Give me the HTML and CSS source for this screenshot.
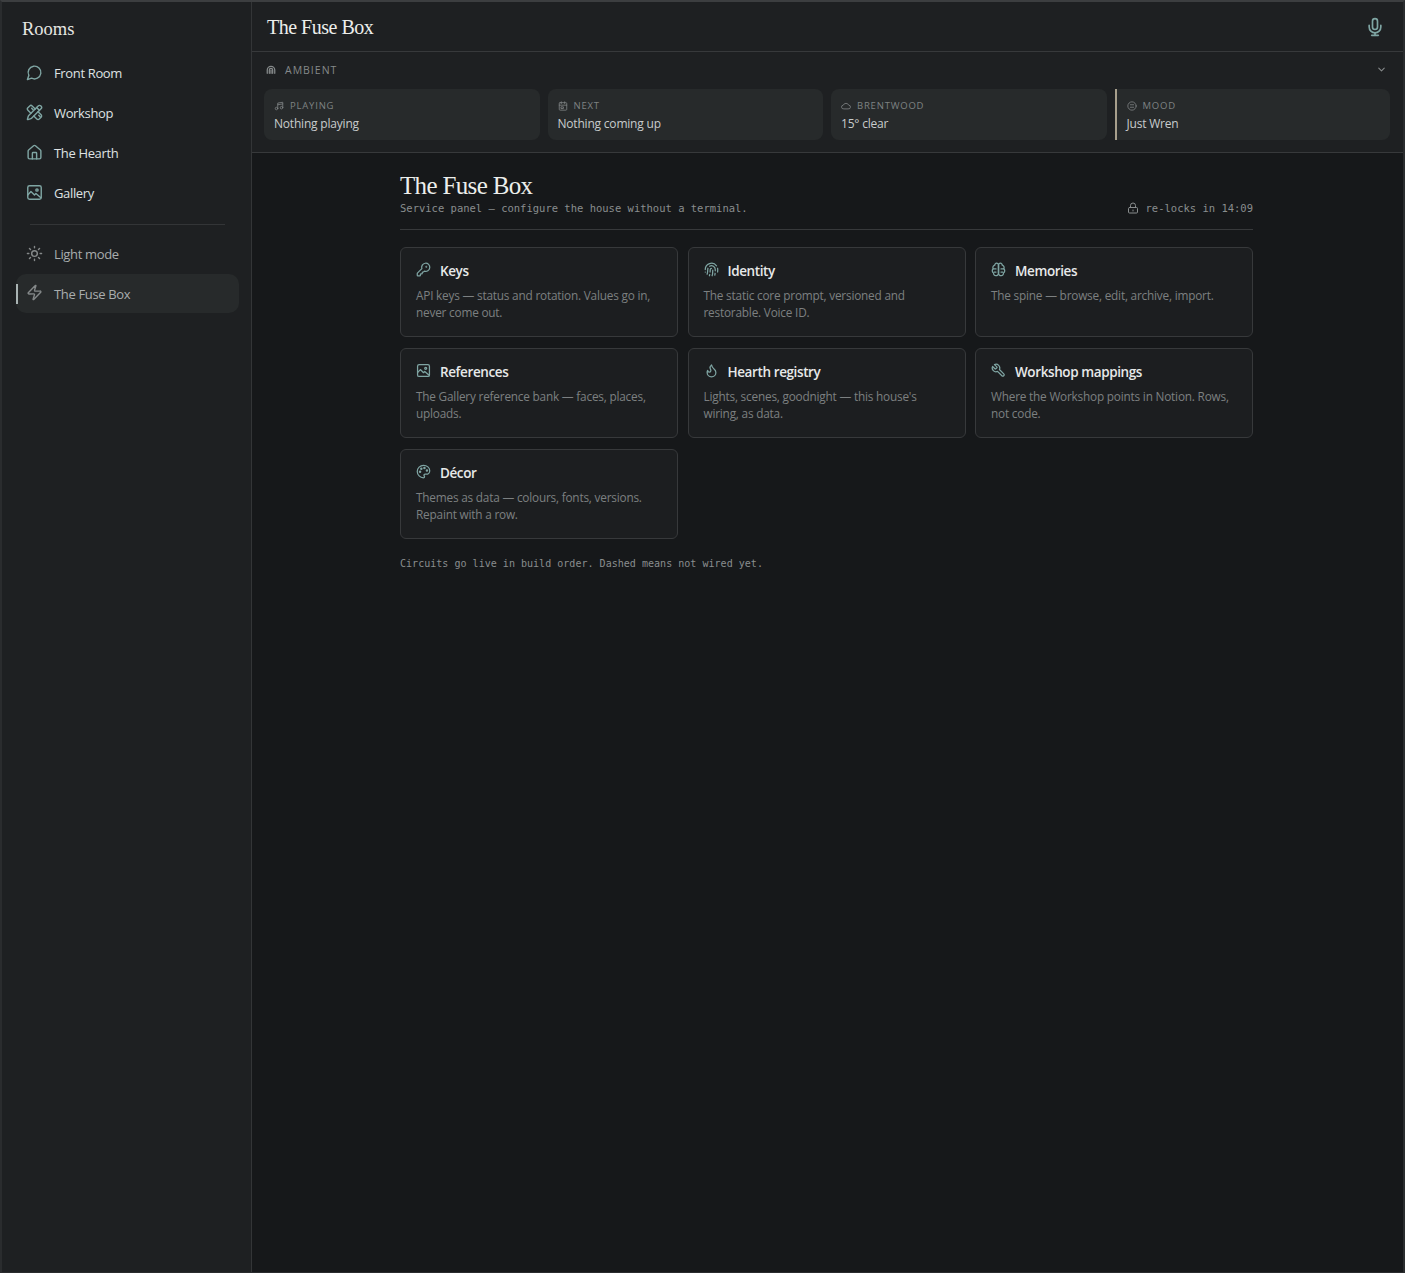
FILE: index.html
```html
<!DOCTYPE html>
<html lang="en">
<head>
<meta charset="utf-8">
<title>The Fuse Box</title>
<link rel="stylesheet" href="styles.css">
</head>
<body>
<svg class="sprite" xmlns="http://www.w3.org/2000/svg">
<symbol id="i-chat" viewBox="0 0 24 24"><path d="M7.9 20A9 9 0 1 0 4 16.1L2 22Z"/></symbol>
<symbol id="i-tools" viewBox="0 0 24 24"><path d="M13 7 8.7 2.7a2.41 2.41 0 0 0-3.4 0L2.7 5.3a2.41 2.41 0 0 0 0 3.4L7 13"/><path d="m8 6 2 2"/><path d="m18 16 2 2"/><path d="m17 11 4.3 4.3c.94.94.94 2.46 0 3.4l-2.6 2.6c-.94.94-2.46.94-3.4 0L11 17"/><path d="M21.174 6.812a1 1 0 0 0-3.986-3.987L3.842 16.174a2 2 0 0 0-.5.83l-1.321 4.352a.5.5 0 0 0 .623.622l4.353-1.32a2 2 0 0 0 .83-.497z"/><path d="m15 5 4 4"/></symbol>
<symbol id="i-house" viewBox="0 0 24 24"><path d="M15 21v-8a1 1 0 0 0-1-1h-4a1 1 0 0 0-1 1v8"/><path d="M3 10a2 2 0 0 1 .709-1.528l7-5.999a2 2 0 0 1 2.582 0l7 5.999A2 2 0 0 1 21 10v9a2 2 0 0 1-2 2H5a2 2 0 0 1-2-2z"/></symbol>
<symbol id="i-image" viewBox="0 0 24 24"><rect x="2.5" y="2.5" width="19" height="19" rx="2.5"/><circle cx="15.5" cy="8.5" r="1.6"/><path d="M2.5 15.5l4.5-5 5 5 2-2 7 6"/></symbol>
<symbol id="i-sun" viewBox="0 0 24 24"><circle cx="12" cy="12" r="4"/><path d="M12 2v2M12 20v2M4.93 4.93l1.41 1.41M17.66 17.66l1.41 1.41M2 12h2M20 12h2M6.34 17.66l-1.41 1.41M19.07 4.93l-1.41 1.41"/></symbol>
<symbol id="i-zap" viewBox="0 0 24 24"><path d="M4 14a1 1 0 0 1-.78-1.63l9.9-10.2a.5.5 0 0 1 .86.46l-1.92 6.02A1 1 0 0 0 13 10h7a1 1 0 0 1 .78 1.63l-9.9 10.2a.5.5 0 0 1-.86-.46l1.92-6.02A1 1 0 0 0 11 14z"/></symbol>
<symbol id="i-mic" viewBox="0 0 24 24"><path d="M12 19v3"/><path d="M8 22h8"/><path d="M19 10v2a7 7 0 0 1-14 0v-2"/><rect x="9" y="2" width="6" height="13" rx="3"/></symbol>
<symbol id="i-arch" viewBox="0 0 24 24"><path d="M3 20v-8a9 9 0 0 1 18 0v8"/><path d="M8 20v-8a4 4 0 0 1 8 0v8"/><path d="M12 12v8"/></symbol>
<symbol id="i-music" viewBox="0 0 24 24"><path d="M9 18V5l12-2v13"/><circle cx="6" cy="18" r="3"/><circle cx="18" cy="16" r="3"/><path d="M9 9l12-2"/></symbol>
<symbol id="i-cal" viewBox="0 0 24 24"><rect x="3" y="4" width="18" height="18" rx="2"/><path d="M3 10h18M16 2v4M8 2v4M8 14h5v4H8z"/></symbol>
<symbol id="i-cloud" viewBox="0 0 24 24"><path d="M6 19a4.5 4.5 0 0 1-.5-9 7 7 0 0 1 13 0 4.5 4.5 0 0 1-.5 9z"/></symbol>
<symbol id="i-meh" viewBox="0 0 24 24"><circle cx="12" cy="12" r="10"/><path d="M8 15h8M8 9h8"/></symbol>
<symbol id="i-chev" viewBox="0 0 24 24"><path d="m6 9 6 6 6-6"/></symbol>
<symbol id="i-lock" viewBox="0 0 24 24"><rect x="3" y="11" width="18" height="11" rx="2"/><path d="M7 11V7a5 5 0 0 1 10 0v4"/><path d="M12 16v2"/></symbol>
<symbol id="i-key" viewBox="0 0 24 24"><path d="M2.586 17.414A2 2 0 0 0 2 18.828V21a1 1 0 0 0 1 1h3a1 1 0 0 0 1-1v-1a1 1 0 0 1 1-1h1a1 1 0 0 0 1-1v-1a1 1 0 0 1 1-1h.172a2 2 0 0 0 1.414-.586l.814-.814a6.5 6.5 0 1 0-4-4z"/><circle cx="16.5" cy="7.5" r=".5"/></symbol>
<symbol id="i-finger" viewBox="0 0 24 24"><path d="M12 10a2 2 0 0 0-2 2c0 1.02-.1 2.51-.26 4"/><path d="M14 13.12c0 2.38 0 6.38-1 8.88"/><path d="M17.29 21.02c.12-.6.43-2.3.5-3.02"/><path d="M2 12a10 10 0 0 1 18-6"/><path d="M2 16h.01"/><path d="M21.8 16c.2-2 .131-5.354 0-6"/><path d="M5 19.5C5.5 18 6 15 6 12a6 6 0 0 1 .34-2"/><path d="M8.65 22c.21-.66.45-1.32.57-2"/><path d="M9 6.8a6 6 0 0 1 9 5.2v2"/></symbol>
<symbol id="i-brain" viewBox="0 0 24 24"><path d="M12 5a3 3 0 1 0-5.997.125 4 4 0 0 0-2.526 5.77 4 4 0 0 0 .556 6.588A4 4 0 1 0 12 18Z"/><path d="M12 5a3 3 0 1 1 5.997.125 4 4 0 0 1 2.526 5.77 4 4 0 0 1-.556 6.588A4 4 0 1 1 12 18Z"/><path d="M12 5v13M3.5 11H8M16 11h4.5M5 16h3M16 16h3"/></symbol>
<symbol id="i-flame" viewBox="0 0 24 24"><path d="M8.5 14.5A2.5 2.5 0 0 0 11 12c0-1.38-.5-2-1-3-1.072-2.143-.224-4.054 2-6 .5 2.5 2 4.9 4 6.5 2 1.6 3 3.5 3 5.5a7 7 0 1 1-14 0c0-1.153.433-2.294 1-3a2.5 2.5 0 0 0 2.5 2.5z"/></symbol>
<symbol id="i-wrench" viewBox="0 0 24 24"><g transform="translate(24 0) scale(-1 1)"><path d="M14.7 6.3a1 1 0 0 0 0 1.4l1.6 1.6a1 1 0 0 0 1.4 0l3.77-3.77a6 6 0 0 1-7.94 7.94l-6.91 6.91a2.12 2.12 0 0 1-3-3l6.91-6.91a6 6 0 0 1 7.94-7.94l-3.76 3.76z"/></g></symbol>
<symbol id="i-palette" viewBox="0 0 24 24"><circle cx="13.5" cy="6.5" r="1"/><circle cx="17.5" cy="10.5" r="1"/><circle cx="8.5" cy="7.5" r="1"/><circle cx="6.5" cy="12.5" r="1"/><path d="M12 2C6.5 2 2 6.5 2 12s4.5 10 10 10c.926 0 1.648-.746 1.648-1.688 0-.437-.18-.835-.437-1.125-.29-.289-.438-.652-.438-1.125a1.64 1.64 0 0 1 1.668-1.668h1.996c3.051 0 5.555-2.503 5.555-5.554C21.965 6.012 17.461 2 12 2z"/></symbol>
</svg>

<div class="app">
  <aside class="sidebar">
    <h2 class="rooms">Rooms</h2>
    <nav class="nav">
      <a class="nav-item"><svg class="ico ico-nav"><use href="#i-chat"/></svg><span>Front Room</span></a>
      <a class="nav-item"><svg class="ico ico-nav"><use href="#i-tools"/></svg><span>Workshop</span></a>
      <a class="nav-item"><svg class="ico ico-nav"><use href="#i-house"/></svg><span>The Hearth</span></a>
      <a class="nav-item"><svg class="ico ico-nav"><use href="#i-image"/></svg><span>Gallery</span></a>
    </nav>
    <div class="nav-rule"></div>
    <nav class="nav">
      <a class="nav-item muted"><svg class="ico ico-nav"><use href="#i-sun"/></svg><span>Light mode</span></a>
      <a class="nav-item muted active"><svg class="ico ico-nav"><use href="#i-zap"/></svg><span>The Fuse Box</span></a>
    </nav>
  </aside>

  <div class="content">
    <header class="topbar">
      <h1 class="topbar-title">The Fuse Box</h1>
      <svg class="ico ico-mic"><use href="#i-mic"/></svg>
    </header>

    <section class="ambient">
      <div class="ambient-head">
        <span class="ambient-label"><svg class="ico ico-arch"><use href="#i-arch"/></svg>AMBIENT</span>
        <svg class="ico ico-chev"><use href="#i-chev"/></svg>
      </div>
      <div class="ambient-grid">
        <div class="tile"><div class="tile-label"><svg class="ico ico-tile"><use href="#i-music"/></svg>PLAYING</div><div class="tile-value">Nothing playing</div></div>
        <div class="tile"><div class="tile-label"><svg class="ico ico-tile"><use href="#i-cal"/></svg>NEXT</div><div class="tile-value">Nothing coming up</div></div>
        <div class="tile"><div class="tile-label"><svg class="ico ico-tile"><use href="#i-cloud"/></svg>BRENTWOOD</div><div class="tile-value">15° clear</div></div>
        <div class="tile tile-accent"><div class="tile-label"><svg class="ico ico-tile"><use href="#i-meh"/></svg>MOOD</div><div class="tile-value">Just Wren</div></div>
      </div>
    </section>

    <main class="main">
      <div class="panel">
        <div class="panel-head">
          <div>
            <h2 class="panel-title">The Fuse Box</h2>
            <p class="mono">Service panel — configure the house without a terminal.</p>
          </div>
          <p class="mono relock"><svg class="ico ico-lock"><use href="#i-lock"/></svg>re-locks in 14:09</p>
        </div>
        <div class="cards">
          <article class="card"><h3 class="card-title"><svg class="ico ico-card"><use href="#i-key"/></svg>Keys</h3><p class="card-text">API keys — status and rotation. Values go in, never come out.</p></article>
          <article class="card"><h3 class="card-title"><svg class="ico ico-card"><use href="#i-finger"/></svg>Identity</h3><p class="card-text">The static core prompt, versioned and restorable. Voice ID.</p></article>
          <article class="card"><h3 class="card-title"><svg class="ico ico-card"><use href="#i-brain"/></svg>Memories</h3><p class="card-text">The spine — browse, edit, archive, import.</p></article>
          <article class="card"><h3 class="card-title"><svg class="ico ico-card"><use href="#i-image"/></svg>References</h3><p class="card-text">The Gallery reference bank — faces, places, uploads.</p></article>
          <article class="card"><h3 class="card-title"><svg class="ico ico-card"><use href="#i-flame"/></svg>Hearth registry</h3><p class="card-text">Lights, scenes, goodnight — this house's wiring, as data.</p></article>
          <article class="card"><h3 class="card-title"><svg class="ico ico-card"><use href="#i-wrench"/></svg>Workshop mappings</h3><p class="card-text">Where the Workshop points in Notion. Rows, not code.</p></article>
          <article class="card"><h3 class="card-title"><svg class="ico ico-card"><use href="#i-palette"/></svg>Décor</h3><p class="card-text">Themes as data — colours, fonts, versions. Repaint with a row.</p></article>
        </div>
        <p class="mono foot">Circuits go live in build order. Dashed means not wired yet.</p>
      </div>
    </main>
  </div>
</div>
</body>
</html>
```

FILE: styles.css
```css
* { box-sizing: border-box; }
html, body { margin: 0; height: 100%; }
body {
  background: #16181a;
  font-family: "Open Sans", "Noto Sans", sans-serif;
  color: #d8dbdc;
  overflow: hidden;
}
.sprite { display: none; }
.ico {
  fill: none;
  stroke: currentColor;
  stroke-width: 2;
  stroke-linecap: round;
  stroke-linejoin: round;
  flex: none;
}
h1, h2, h3, p { margin: 0; font-weight: normal; }

.app {
  display: flex;
  height: 1273px;
  border-top: 2px solid #3c3e40;
  border-left: 2px solid #2a2c2e;
  border-right: 2px solid #2a2c2e;
  border-bottom: 1px solid #2a2c2e;
}

.sidebar {
  width: 250px;
  flex: none;
  background: #1e2022;
  border-right: 1px solid #333537;
  padding: 15px 12px 0 14px;
}
.rooms {
  font-family: "Liberation Serif", "DejaVu Serif", serif;
  font-size: 18.5px;
  line-height: 24px;
  color: #e6e6e2;
  padding-left: 6px;
  margin-bottom: 12px;
}
.nav { display: flex; flex-direction: column; }
.nav-item {
  display: flex;
  align-items: center;
  gap: 11px;
  height: 40px;
  padding-left: 10px;
  font-size: 13px;
  letter-spacing: -.35px;
  color: #dfe2e3;
  border-radius: 10px;
  position: relative;
}
.ico-nav { width: 17px; height: 17px; color: #7fa5a3; stroke-width: 2; margin-top: -2px; }
.muted { color: #a9adae; }
.muted .ico-nav { color: #85898a; }
.active { background: #272a2b; height: 39px; }
.active::before {
  content: "";
  position: absolute;
  left: 0;
  top: 10px;
  width: 2px;
  height: 20px;
  background: #a9b3b3;
}
.nav-rule {
  height: 1px;
  background: #333537;
  margin: 11px 14px 9px 14px;
}

.content { flex: 1; min-width: 0; display: flex; flex-direction: column; }
.topbar {
  height: 50px;
  flex: none;
  background: #1e2022;
  border-bottom: 1px solid #37393b;
  display: flex;
  align-items: center;
  justify-content: space-between;
  padding: 2px 18px 0 15px;
}
.topbar-title {
  font-family: "Liberation Serif", "DejaVu Serif", serif;
  font-size: 20px;
  letter-spacing: -.5px;
  color: #eceeeb;
}
.ico-mic { width: 20px; height: 20px; color: #7fa5a3; stroke-width: 2; margin-top: -2px; }

.ambient {
  flex: none;
  height: 101px;
  background: #1e2022;
  border-bottom: 1px solid #37393b;
  padding: 0 13px 0 12px;
}
.ambient-head {
  height: 37px;
  display: flex;
  align-items: center;
  justify-content: space-between;
  padding: 0 3px 2px 2px;
}
.ambient-label {
  display: flex;
  align-items: center;
  gap: 9px;
  font-size: 10.5px;
  letter-spacing: 1px;
  color: #85898a;
}
.ico-arch { width: 10px; height: 10px; color: #85898a; stroke-width: 3; }
.ico-chev { width: 11px; height: 11px; color: #85898a; stroke-width: 2.4; }
.ambient-grid {
  display: grid;
  grid-template-columns: repeat(4, 1fr);
  gap: 8px;
}
.tile {
  height: 51px;
  background: #272a2b;
  border-radius: 8px;
  padding: 10px 10px 0;
}
.tile-accent { border-left: 2px solid #a79f8c; border-radius: 0 8px 8px 0; padding-left: 10px; }
.tile-label {
  display: flex;
  align-items: center;
  gap: 6px;
  font-size: 9.5px;
  letter-spacing: .8px;
  line-height: 14px;
  color: #7e8283;
}
.ico-tile { width: 10px; height: 10px; }
.tile-value { font-size: 12px; letter-spacing: -.2px; line-height: 18px; margin-top: 2px; color: #c8cccd; }

.main { flex: 1; min-height: 0; }
.panel { width: 853px; margin: 0 auto; padding-top: 20px; transform: translateX(-1px); }
.panel-head {
  display: flex;
  justify-content: space-between;
  align-items: flex-end;
  padding-bottom: 13px;
  border-bottom: 1px solid #37393b;
  margin-bottom: 17px;
}
.panel-title {
  font-family: "Liberation Serif", "DejaVu Serif", serif;
  font-size: 25px;
  letter-spacing: -.65px;
  line-height: 26px;
  color: #eceeeb;
}
.mono {
  font-family: "DejaVu Sans Mono", "Liberation Mono", monospace;
  font-size: 10.5px;
  line-height: 16px;
  margin-top: 1px;
  color: #898d8e;
}
.relock { display: flex; align-items: center; gap: 7px; }
.ico-lock { width: 12px; height: 12px; color: #898d8e; }

.cards {
  display: grid;
  grid-template-columns: repeat(3, 278px);
  justify-content: space-between;
  row-gap: 11px;
}
.card {
  height: 90px;
  background: #1c1e20;
  border: 1px solid #37393b;
  border-radius: 6px;
  padding: 13px 14px 0 15px;
}
.card-title {
  display: flex;
  align-items: center;
  gap: 9px;
  font-size: 13.5px;
  font-weight: 600;
  letter-spacing: -.4px;
  line-height: 20px;
  color: #e7e9e9;
  margin-bottom: 6px;
}
.ico-card { width: 15px; height: 15px; color: #7fa5a3; stroke-width: 2; margin-top: -3px; }
.card-text { font-size: 11.8px; letter-spacing: -.2px; line-height: 17px; color: #7c8081; }
.foot { margin-top: 17px; font-size: 10.05px; }
```
